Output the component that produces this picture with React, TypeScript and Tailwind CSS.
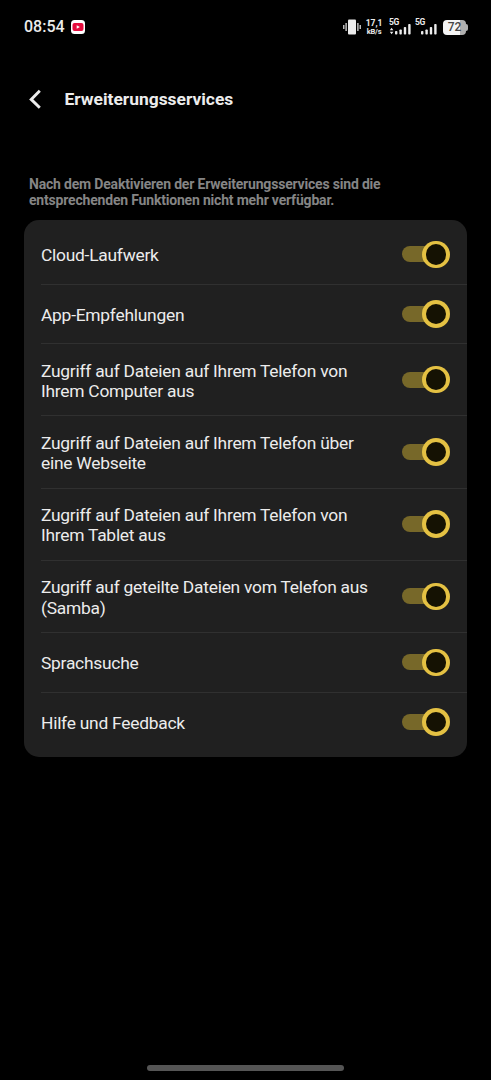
import { useState } from "react"

const SERVICES = [
  { id: "cloud", lines: ["Cloud-Laufwerk"] },
  { id: "apps", lines: ["App-Empfehlungen"] },
  { id: "computer", lines: ["Zugriff auf Dateien auf Ihrem Telefon von", "Ihrem Computer aus"] },
  { id: "web", lines: ["Zugriff auf Dateien auf Ihrem Telefon über", "eine Webseite"] },
  { id: "tablet", lines: ["Zugriff auf Dateien auf Ihrem Telefon von", "Ihrem Tablet aus"] },
  { id: "samba", lines: ["Zugriff auf geteilte Dateien vom Telefon aus", "(Samba)"] },
  { id: "voice", lines: ["Sprachsuche"] },
  { id: "help", lines: ["Hilfe und Feedback"] },
]

export default function App(): JSX.Element {
  return (
    <div className="flex h-[1080px] w-[491px] flex-col overflow-hidden bg-black font-['Roboto',sans-serif] text-[#ececec]">
      <StatusBar />
      <header className="flex h-[90px] items-center pl-[28px]">
        <button type="button" aria-label="Zurück" className="flex">
          <svg viewBox="0 0 14 20" className="h-5 w-3.5" fill="none">
            <path d="M11.8 1.8 3.2 10.4l8.6 8.4" stroke="#ececec" strokeWidth="2.9" />
          </svg>
        </button>
        <h1 className="ml-[22.5px] text-[17.4px] font-bold leading-5">Erweiterungsservices</h1>
      </header>
      <main className="px-6 pt-8">
        <p className="whitespace-nowrap pl-[5px] text-[14px] font-bold leading-4 tracking-[-0.19px] text-[#858585]">
          Nach dem Deaktivieren der Erweiterungsservices sind die
          <br />
          entsprechenden Funktionen nicht mehr verfügbar.
        </p>
        <ul className="mt-3 w-[443px] rounded-[15px] bg-[#202020] py-[5px]">
          {SERVICES.map((service, i) => (
            <ServiceRow key={service.id} lines={service.lines} divided={i < SERVICES.length - 1} />
          ))}
        </ul>
      </main>
      <div className="mx-auto mb-[9px] mt-auto h-1.5 w-[197px] rounded-full bg-[#555]" />
    </div>
  )
}

function ServiceRow({ lines, divided }: { lines: string[]; divided: boolean }): JSX.Element {
  const [on, setOn] = useState(true)
  return (
    <li
      className={`ml-[17px] flex items-center justify-between border-b pr-[17.5px] ${divided ? "border-[#303030]" : "border-transparent"} ${lines.length > 1 ? "h-[72.25px]" : "h-[59.5px]"}`}
    >
      <span className="whitespace-nowrap pt-[2.5px] text-[17.4px] leading-[20.2px] tracking-[-0.25px]">
        {lines.map((line) => (
          <span key={line} className="block">{line}</span>
        ))}
      </span>
      <button
        type="button"
        role="switch"
        aria-checked={on}
        aria-label={lines.join(" ")}
        onClick={() => setOn(!on)}
        className={`flex h-4 w-[47.5px] items-center ${on ? "justify-end" : "justify-start"}`}
      >
        <span className={`mr-[-20px] h-4 w-10 rounded-full ${on ? "bg-[#776829]" : "bg-[#444]"}`} />
        <span className="flex h-[27.5px] w-[27.5px] shrink-0 items-center justify-center rounded-full bg-[#e4c143]">
          <span className="h-[20.5px] w-[20.5px] rounded-full bg-[#151203]" />
        </span>
      </button>
    </li>
  )
}

function StatusBar(): JSX.Element {
  return (
    <div className="flex h-[54px] items-center pl-6 pr-[23px]">
      <span className="text-[16px] font-medium leading-5">08:54</span>
      <svg viewBox="0 0 14 14" className="ml-[6px] h-3.5 w-3.5">
        <rect width="14" height="14" rx="3.5" fill="#fff" />
        <rect x="1.5" y="3" width="11" height="8" rx="2" fill="#e60b3d" />
        <path d="M5.7 5.2v3.6L8.9 7z" fill="#fff" />
      </svg>
      <svg viewBox="0 0 18 16" className="ml-auto h-4 w-[18px]" fill="#ececec">
        <rect x="5" y="0.5" width="8" height="15" rx="1" />
        <path d="M2.5 4h1.2v8H2.5zM0.2 6h1.2v4H0.2zM14.3 4h1.2v8h-1.2zM16.6 6h1.2v4h-1.2z" />
      </svg>
      <span className="ml-[4px] mr-px w-[18px] whitespace-nowrap text-center text-[8.5px] font-bold leading-[8px]">
        17,1
        <br />
        <span className="text-[7.5px] tracking-[-0.2px]">kB/s</span>
      </span>
      <Signal activity />
      <Signal />
      <span className="ml-[5px] flex h-[15px] items-center">
        <span className="flex h-[15px] w-[23px] items-center justify-center rounded-[4px] bg-linear-to-r from-[#f4f4f4] from-72% to-[#b0b0b0] to-72% text-[12px] font-medium leading-none text-[#444]">
          72
        </span>
        <span className="h-[7px] w-[2px] rounded-r-full bg-[#b0b0b0]" />
      </span>
    </div>
  )
}

function Signal({ activity = false }: { activity?: boolean }): JSX.Element {
  return (
    <span className={`flex h-4 flex-col ${activity ? "ml-[5px]" : "ml-[3px]"}`}>
      <svg viewBox="0 0 23 16" className="h-4 w-[23px] overflow-visible" fill="#ececec">
        <text x="0" y="6" fontSize="8.5" fontWeight="700" letterSpacing="-0.4">5G</text>
        {activity && (
          <path d="M0.8 11.3 2.6 8.8 4.4 11.3zM0.8 12.7 2.6 15.2 4.4 12.7z" />
        )}
        <rect x="6" y="12" width="2.4" height="3.5" rx="0.8" />
        <rect x="10.4" y="10.5" width="2.4" height="5" rx="0.8" />
        <rect x="14.8" y="8" width="2.4" height="7.5" rx="0.8" />
        <rect x="19.2" y="5" width="2.4" height="10.5" rx="0.8" />
      </svg>
    </span>
  )
}
